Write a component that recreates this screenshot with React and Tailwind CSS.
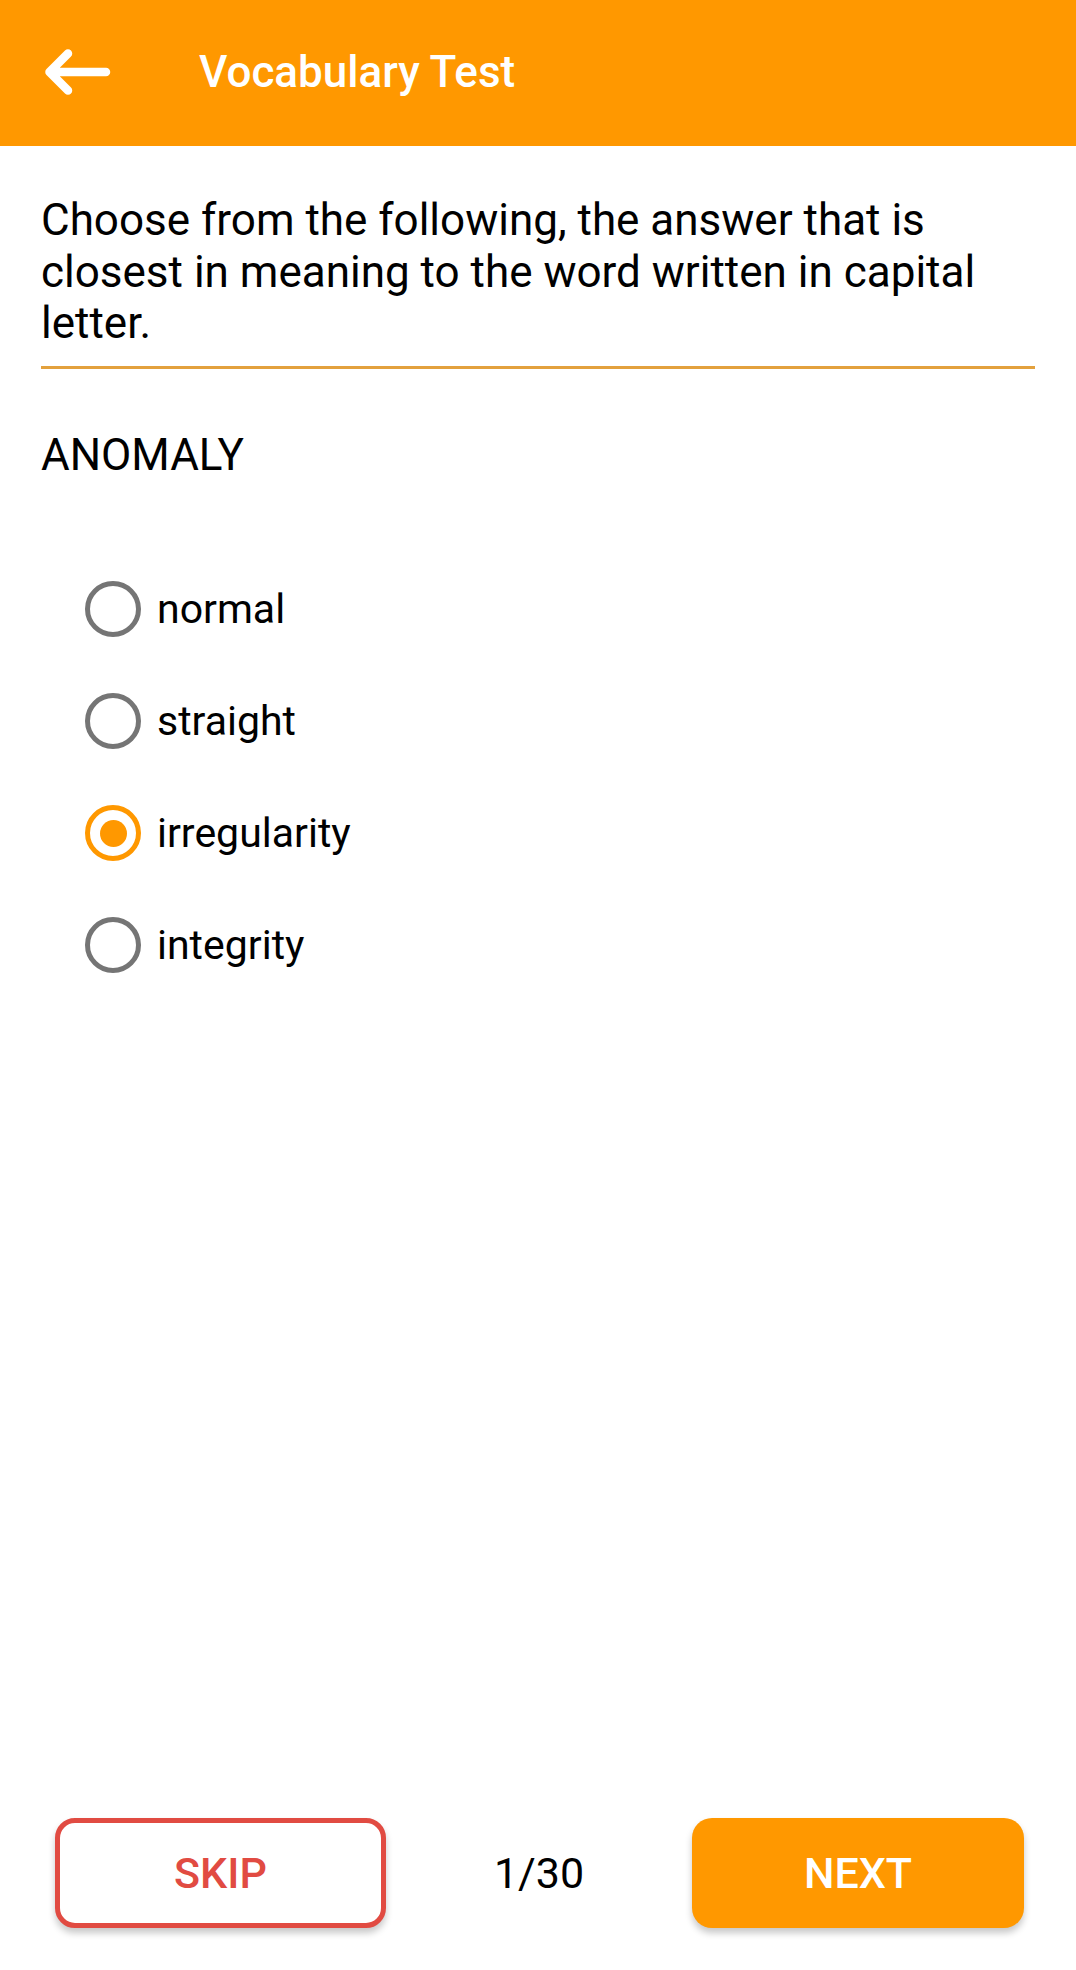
import { useState } from "react";

const options = ["normal", "straight", "irregularity", "integrity"];

function BackArrow() {
  return (
    <svg width="66" height="47" viewBox="0 0 66 47" fill="none" aria-hidden="true">
      <path
        d="M4.5 23H61M23 4.5L4.5 23L23 41.5"
        stroke="#fff"
        strokeWidth="8.5"
        strokeLinecap="round"
        strokeLinejoin="round"
      />
    </svg>
  );
}

function Radio({ checked }) {
  if (checked) {
    return (
      <span className="grid h-[56px] w-[56px] shrink-0 place-items-center rounded-full border-[5.5px] border-[#ff9800]">
        <span className="h-[27px] w-[27px] rounded-full bg-[#ff9800]" />
      </span>
    );
  }
  return <span className="h-[56px] w-[56px] shrink-0 rounded-full border-[5.5px] border-[#757575]" />;
}

export default function App() {
  const [picked, setPicked] = useState(2);

  return (
    <div className="flex min-h-[1970px] flex-col bg-white font-['Roboto',sans-serif] text-black">
      <header className="flex h-[146px] items-center bg-[#ff9800] pl-[45px]">
        <button type="button" className="-mt-[2px]">
          <BackArrow />
        </button>
        <h1 className="-mt-[2px] ml-[88px] text-[44px] font-medium leading-none text-white">Vocabulary Test</h1>
      </header>

      <main className="px-[41px] pt-[49px]">
        <p className="text-[44px] leading-[51.5px]">
          Choose from the following, the answer that is closest in meaning to the word written in capital letter.
        </p>
        <div className="mt-[16px] h-[3px] bg-[#e3a13d]" />

        <div className="mt-[61px] text-[44px] leading-[51.5px]">ANOMALY</div>

        <div className="mt-[72px] flex flex-col pl-[44px]">
          {options.map((opt, i) => (
            <button
              key={opt}
              type="button"
              onClick={() => setPicked(i)}
              className="flex h-[112px] items-center gap-[16px] text-left"
            >
              <Radio checked={picked === i} />
              <span className="text-[41px] leading-[51px]">{opt}</span>
            </button>
          ))}
        </div>
      </main>

      <footer className="mt-auto flex items-center justify-between pb-[42px] pl-[55px] pr-[52px]">
        <button
          type="button"
          className="flex h-[110px] w-[331px] items-center justify-center rounded-[20px] border-[5px] border-[#e14b42] bg-white text-[43px] font-medium text-[#e14b42] shadow-[0_5px_7px_rgba(0,0,0,0.22)]"
        >
          SKIP
        </button>
        <span className="text-[43px]">1/30</span>
        <button
          type="button"
          className="flex h-[110px] w-[332px] items-center justify-center rounded-[20px] bg-[#ff9800] text-[43px] font-medium text-white shadow-[0_5px_7px_rgba(0,0,0,0.22)]"
        >
          NEXT
        </button>
      </footer>
    </div>
  );
}
